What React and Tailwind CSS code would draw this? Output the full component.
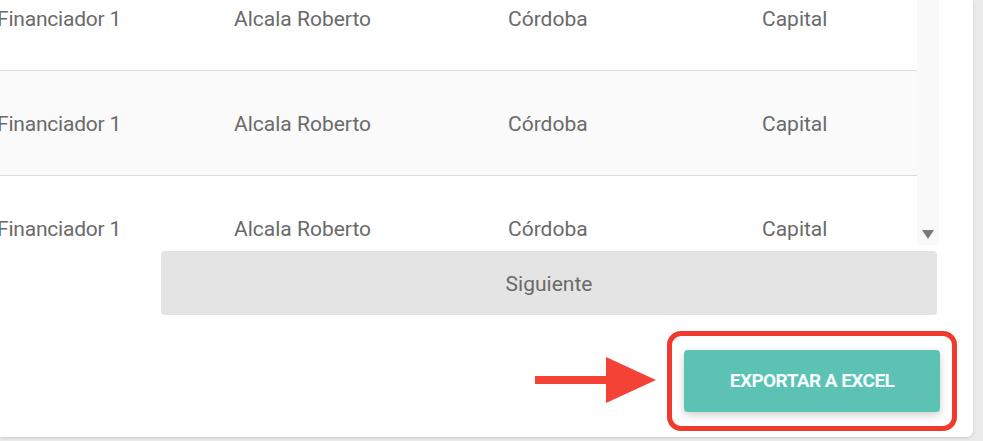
export default function App() {
  const rows = [0, 1, 2];
  return (
    <div className="w-[983px] h-[441px] bg-[#ebebeb] overflow-hidden" style={{ fontFamily: "Roboto, 'Noto Sans', sans-serif" }}>
      <div className="w-[973px] h-[437px] bg-white rounded-br-[6px] shadow-[0_1px_3px_rgba(0,0,0,0.15)] flex flex-col overflow-hidden">
        <div className="h-[245px] flex overflow-hidden shrink-0">
          <div className="w-[917px] mt-[-34px] shrink-0">
            {rows.map((i) => (
              <div
                key={i}
                className={`h-[105px] flex items-center pt-[3px] border-b border-[#dcdcdc] text-[21px] text-[#6a6a6a] ${i === 1 ? "bg-[#fafafa]" : "bg-white"}`}
              >
                <div className="w-[234px] ml-[-3px] shrink-0 tracking-[-0.01em]">Financiador 1</div>
                <div className="w-[274px] ml-[3px] shrink-0">Alcala Roberto</div>
                <div className="w-[254px] shrink-0">Córdoba</div>
                <div className="shrink-0">Capital</div>
              </div>
            ))}
          </div>
          <div className="w-[22px] bg-[#f9f9f9] flex flex-col justify-end items-center pb-[6px] shrink-0">
            <svg width="12" height="9" viewBox="0 0 12 9">
              <path d="M0 0 H12 L6 9 Z" fill="#7a7a7a" />
            </svg>
          </div>
        </div>
        <div className="ml-[161px] mt-[6px] w-[776px] h-[64px] pt-[4px] bg-[#e4e4e4] rounded-[4px] flex items-center justify-center text-[21px] text-[#6a6a6a]">
          Siguiente
        </div>
        <div className="flex items-center mt-[16px] ml-[535px]">
          <svg width="122" height="48" viewBox="0 0 122 48" className="mt-[-2px]">
            <rect x="0" y="20" width="74" height="8" fill="#f44336" />
            <path d="M71 1 L121 24 L71 47 Z" fill="#f44336" />
          </svg>
          <div className="ml-[10px] w-[290px] h-[100px] rounded-[14px] border-[5px] border-[#f03a2e] flex items-center justify-center">
            <div className="w-[256px] h-[62px] bg-[#5bc2b4] rounded-[4px] shadow-[0_3px_8px_rgba(0,0,0,0.2)] flex items-center justify-center text-[#f4fbfa] font-bold text-[19px] tracking-[-0.03em]">
              EXPORTAR A EXCEL
            </div>
          </div>
        </div>
      </div>
    </div>
  );
}
